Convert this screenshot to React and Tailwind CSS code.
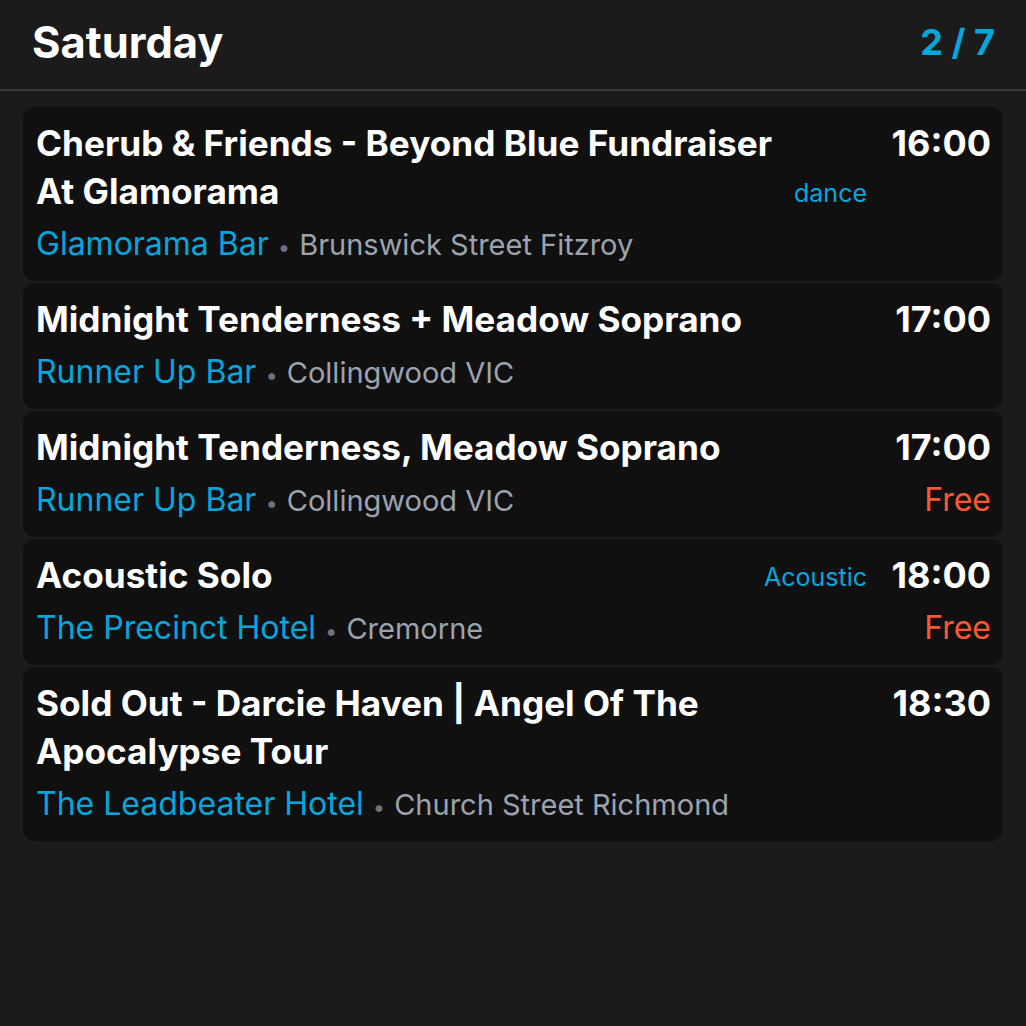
import React from "react";

const events = [
  {
    title: "Cherub & Friends - Beyond Blue Fundraiser At Glamorama",
    venue: "Glamorama Bar",
    place: "Brunswick Street Fitzroy",
    time: "16:00",
    tag: "dance",
  },
  {
    title: "Midnight Tenderness + Meadow Soprano",
    venue: "Runner Up Bar",
    place: "Collingwood VIC",
    time: "17:00",
  },
  {
    title: "Midnight Tenderness, Meadow Soprano",
    venue: "Runner Up Bar",
    place: "Collingwood VIC",
    time: "17:00",
    free: true,
  },
  {
    title: "Acoustic Solo",
    venue: "The Precinct Hotel",
    place: "Cremorne",
    time: "18:00",
    tag: "Acoustic",
    free: true,
  },
  {
    title: "Sold Out - Darcie Haven | Angel Of The Apocalypse Tour",
    venue: "The Leadbeater Hotel",
    place: "Church Street Richmond",
    time: "18:30",
  },
];

function EventCard({ ev }) {
  return (
    <div className="flex rounded-xl bg-[#101010] pl-[13px] pr-3 pt-3 pb-[15px]">
      <div className="flex-1 min-w-0">
        <div className="flex items-end gap-2">
          <h2 className="flex-1 text-[35.2px] leading-[48px] font-bold text-white">{ev.title}</h2>
          {ev.tag && <span className="text-[25px] leading-[36px] text-[#06a6dc] pb-[4px]">{ev.tag}</span>}
        </div>
        <div className="mt-[6px] h-[45px] flex items-baseline overflow-visible">
          <span className="text-[32px] leading-[45px] text-[#06a6dc]">{ev.venue}</span>
          <span className="text-[22px] leading-[45px] text-[#6b7280] px-[9px]">•</span>
          <span className="text-[29px] leading-[45px] text-[#9ca3af]">{ev.place}</span>
        </div>
      </div>
      <div className="w-[100px] ml-6 flex flex-col items-end">
        <span className="text-[36px] leading-[48px] font-bold text-white">{ev.time}</span>
        {ev.free && <span className="mt-[6px] text-[32px] leading-[45px] text-[#ff5733]">Free</span>}
      </div>
    </div>
  );
}

export default function App() {
  return (
    <div className="min-h-screen bg-[#1b1b1b]" style={{ fontFamily: "Inter, 'Noto Sans', sans-serif" }}>
      <div className="flex items-center justify-between pl-8 pr-[31px] pt-[18px] pb-[23px] border-b-2 border-[#363b44]">
        <h1 className="text-[43.5px] leading-[48px] font-bold text-white">Saturday</h1>
        <span className="text-[36px] leading-[48px] font-bold text-[#06a6dc]">2 / 7</span>
      </div>
      <div className="flex flex-col gap-[2px] px-[23px] pt-4">
        {events.map((ev, i) => (
          <EventCard key={i} ev={ev} />
        ))}
      </div>
    </div>
  );
}
